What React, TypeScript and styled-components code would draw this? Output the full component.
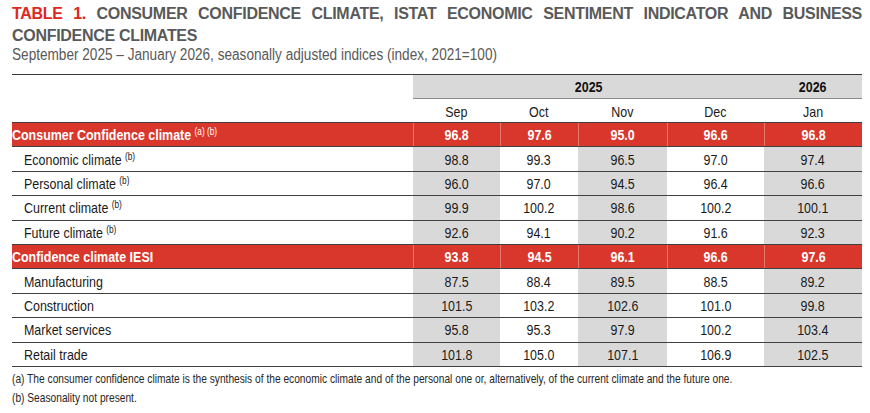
import * as React from 'react';
import styled, {createGlobalStyle, css} from 'styled-components';

const GlobalStyle = createGlobalStyle`
  html, body {
    margin: 0;
    padding: 0;
    background: #fff;
    overflow: hidden;
  }
`;

const sans = `"Liberation Sans", Arial, sans-serif`;

const Page = styled.div`
  width: 850px;
  padding: 3px 0 0 12px;
  font-family: ${sans};
  color: #1a1a1a;
`;

// no Arial Narrow available: squeeze Liberation Sans horizontally
const Narrow = styled.span<{$origin?: string; $scale?: number}>`
  display: inline-block;
  white-space: nowrap;
  transform: scaleX(${p => p.$scale ?? 0.83});
  transform-origin: ${p => p.$origin ?? 'left'} center;
`;

const Title = styled.h1`
  margin: 0;
  font-size: 16px;
  font-weight: bold;
  line-height: 22px;
  letter-spacing: -0.3px;
  color: #595959;
  text-align: justify;
`;

const TitleTag = styled.span`
  color: #e0261e;
`;

const Subtitle = styled.p`
  margin: -1px 0 10px;
  font-size: 16px;
  line-height: 18px;
  color: #595959;
`;

const columns = '401px 87px 78px 89px 97px 98px';

const HeadRow = styled.div`
  display: grid;
  grid-template-columns: ${columns};
  height: 25px;
  border-top: 1px solid #3a3a3a;
  box-sizing: border-box;
`;

const YearCell = styled.div<{$span: number}>`
  grid-column: span ${p => p.$span};
  background: #d9d9d9;
  border-bottom: 1px solid #8c8c8c;
  display: flex;
  align-items: center;
  justify-content: center;
  font-weight: bold;
  font-size: 15px;
  color: #111;
`;

const MonthRow = styled.div`
  display: grid;
  grid-template-columns: ${columns};
  height: 23px;
`;

const MonthCell = styled.div`
  display: flex;
  align-items: center;
  justify-content: center;
  font-size: 15px;
  color: #1a1a1a;
  padding-top: 2px;
`;

const Row = styled.div<{$head?: boolean}>`
  display: grid;
  grid-template-columns: ${columns};
  height: 24.4px;
  box-sizing: border-box;
  border-top: 1px solid #404040;
  ${p => p.$head && css`
    background: #d9372b;
    color: #fff;
    font-weight: bold;
  `}
`;

const LastRule = styled.div`
  border-top: 1px solid #404040;
`;

const Label = styled.div<{$head?: boolean}>`
  display: flex;
  align-items: center;
  font-size: 15px;
  padding-left: ${p => (p.$head ? '0' : '12px')};
`;

const Note = styled.span`
  font-size: 10px;
  font-weight: normal;
  margin-left: 4px;
  position: relative;
  top: -5px;
`;

const Value = styled.div<{$shade: boolean; $head?: boolean}>`
  display: flex;
  align-items: center;
  justify-content: center;
  font-size: 15px;
  background: ${p => (p.$head ? 'transparent' : p.$shade ? '#d9d9d9' : '#fff')};
  ${p => p.$head && css`
    border-left: 1px solid #e9776e;
  `}
`;

const Footnotes = styled.div`
  padding-top: 3px;
  font-size: 12.6px;
  line-height: 19.5px;
  color: #262626;
  overflow: hidden;
`;

type Line = {label: string; notes?: string; head?: boolean; values: string[]};

const lines: Line[] = [
  {label: 'Consumer Confidence climate', notes: '(a) (b)', head: true, values: ['96.8', '97.6', '95.0', '96.6', '96.8']},
  {label: 'Economic climate', notes: '(b)', values: ['98.8', '99.3', '96.5', '97.0', '97.4']},
  {label: 'Personal climate', notes: '(b)', values: ['96.0', '97.0', '94.5', '96.4', '96.6']},
  {label: 'Current climate', notes: '(b)', values: ['99.9', '100.2', '98.6', '100.2', '100.1']},
  {label: 'Future climate', notes: '(b)', values: ['92.6', '94.1', '90.2', '91.6', '92.3']},
  {label: 'Confidence climate IESI', head: true, values: ['93.8', '94.5', '96.1', '96.6', '97.6']},
  {label: 'Manufacturing', values: ['87.5', '88.4', '89.5', '88.5', '89.2']},
  {label: 'Construction', values: ['101.5', '103.2', '102.6', '101.0', '99.8']},
  {label: 'Market services', values: ['95.8', '95.3', '97.9', '100.2', '103.4']},
  {label: 'Retail trade', values: ['101.8', '105.0', '107.1', '106.9', '102.5']},
];

const months = ['Sep', 'Oct', 'Nov', 'Dec', 'Jan'];

export default function App() {
  return (
    <Page>
      <GlobalStyle />
      <Title>
        <TitleTag>TABLE 1.</TitleTag> CONSUMER CONFIDENCE CLIMATE, ISTAT ECONOMIC SENTIMENT INDICATOR AND BUSINESS
        CONFIDENCE CLIMATES
      </Title>
      <Subtitle>
        <Narrow $scale={0.85}>September 2025 – January 2026, seasonally adjusted indices (index, 2021=100)</Narrow>
      </Subtitle>

      <HeadRow>
        <div />
        <YearCell $span={4}><Narrow $origin="center">2025</Narrow></YearCell>
        <YearCell $span={1}><Narrow $origin="center">2026</Narrow></YearCell>
      </HeadRow>
      <MonthRow>
        <div />
        {months.map(m => <MonthCell key={m}><Narrow $origin="center">{m}</Narrow></MonthCell>)}
      </MonthRow>

      {lines.map(line => (
        <Row key={line.label} $head={line.head}>
          <Label $head={line.head}>
            <Narrow>
              {line.label}
              {line.notes ? <Note>{line.notes}</Note> : null}
            </Narrow>
          </Label>
          {line.values.map((v, i) => (
            <Value key={i} $shade={i % 2 === 0} $head={line.head}>
              <Narrow $origin="center">{v}</Narrow>
            </Value>
          ))}
        </Row>
      ))}
      <LastRule />

      <Footnotes>
        <div>
          <Narrow $scale={0.81}>
            (a) The consumer confidence climate is the synthesis of the economic climate and of the personal one or,
            alternatively, of the current climate and the future one.
          </Narrow>
        </div>
        <div><Narrow $scale={0.81}>(b) Seasonality not present.</Narrow></div>
      </Footnotes>
    </Page>
  );
}
